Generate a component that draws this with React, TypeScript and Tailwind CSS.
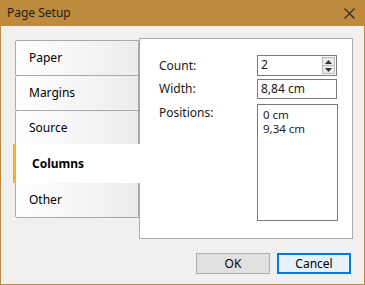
import React from "react";

const tabs = ["Paper", "Margins", "Source", "Columns", "Other"];

function Tab({ label, active }: { label: string; active?: boolean }) {
  if (active) {
    return (
      <div className="relative -ml-[2px] -mr-[2px] -mt-[2px] h-[39px] flex items-center pl-[16px] bg-white border-l-[3px] border-[#f0b22e] z-10">
        <span className="font-bold text-[12px] text-black">{label}</span>
      </div>
    );
  }
  return (
    <div className="h-[36px] flex items-center pl-[13px] border border-[#a9a9a9] -mt-px first:mt-0 rounded-l-[2px] bg-gradient-to-r from-white to-[#ececec]">
      <span className="text-[12px] text-black">{label}</span>
    </div>
  );
}

export default function App() {
  return (
    <div
      className="w-[365px] h-[285px] flex flex-col border-x border-b border-[#bd8a3e] bg-[#f0f0f0] overflow-hidden"
      style={{ fontFamily: '"Noto Sans", "Liberation Sans", sans-serif' }}
    >
      <header className="h-[26px] shrink-0 -mx-px flex items-center justify-between bg-[#bd8a3e] pl-[7px] pr-[10px]">
        <span className="text-[12px] text-[#1c1c1c]">Page Setup</span>
        <svg width="11" height="11" viewBox="0 0 11 11" className="text-[#2a2a2a]">
          <path d="M0.5 0.5 L10.5 10.5 M10.5 0.5 L0.5 10.5" stroke="currentColor" strokeWidth="1.1" />
        </svg>
      </header>
      <section className="flex pl-[14px] pt-[12px]">
        <div className="w-[124px] pt-[2px] flex flex-col">
          {tabs.map((t) => (
            <Tab key={t} label={t} active={t === "Columns"} />
          ))}
        </div>
        <div className="w-[214px] h-[201px] bg-white border border-[#a9a9a9] pl-[19px] pt-[16px] text-[12px] text-[#1a1a1a]">
          <div className="flex items-center h-[21px]">
            <span className="w-[98px]">Count:</span>
            <div className="w-[80px] h-[21px] border border-[#7a7a7a] flex">
              <span className="flex-1 pl-[3px] leading-[18px]">2</span>
              <div className="w-[13px] my-[1px] mr-[1px] flex flex-col border border-[#b8b8b8] bg-[#ececec]">
                <div className="flex-1 flex items-center justify-center border-b border-[#b8b8b8]">
                  <svg width="7" height="4" viewBox="0 0 7 4"><path d="M0 4 L3.5 0 L7 4 Z" fill="#333" /></svg>
                </div>
                <div className="flex-1 flex items-center justify-center">
                  <svg width="7" height="4" viewBox="0 0 7 4"><path d="M0 0 L3.5 4 L7 0 Z" fill="#333" /></svg>
                </div>
              </div>
            </div>
          </div>
          <div className="flex items-center h-[20px] mt-[3px]">
            <span className="w-[98px]">Width:</span>
            <div className="w-[80px] h-[20px] border border-[#7a7a7a] pl-[3px] leading-[18px]">8,84 cm</div>
          </div>
          <div className="flex mt-[5px]">
            <span className="w-[98px] leading-[18px]">Positions:</span>
            <div className="w-[81px] h-[117px] border border-[#7a7a7a] pl-[5px] pt-[3px] text-[11.5px] leading-[14px]">
              <div>0 cm</div>
              <div>9,34 cm</div>
            </div>
          </div>
        </div>
      </section>
      <footer className="flex justify-end gap-[7px] pr-[13px] mt-[14px]">
        <button className="w-[74px] h-[21px] bg-[#e1e1e1] border border-[#adadad] text-[12px] text-black">OK</button>
        <button className="w-[74px] h-[21px] bg-[#e5f1fb] border-2 border-[#0a78d4] text-[12px] text-black">Cancel</button>
      </footer>
    </div>
  );
}
